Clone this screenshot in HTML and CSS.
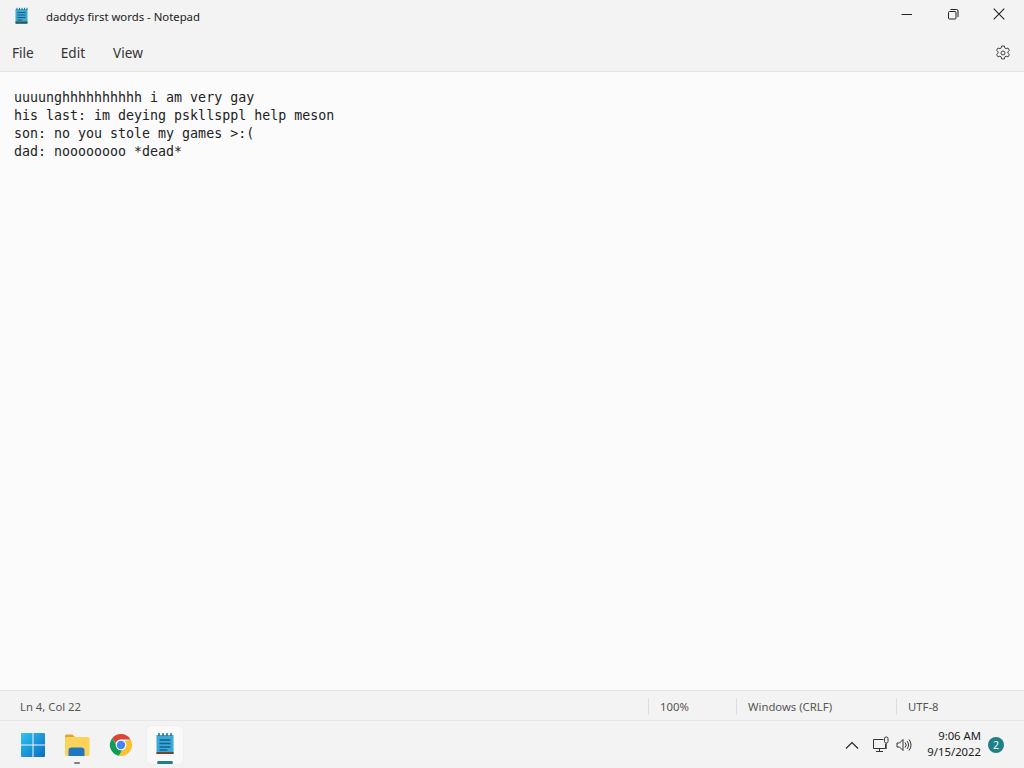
FILE: index.html
```html
<!DOCTYPE html>
<html lang="en">
<head>
<meta charset="utf-8">
<title>daddys first words - Notepad</title>
<link rel="stylesheet" href="styles.css">
</head>
<body>
<div class="window">
  <header class="titlebar">
    <svg class="app-icon" width="16" height="18" viewBox="0 0 16 18">
      <rect x="1.5" y="2" width="12" height="14" fill="#3fa9d6"/>
      <rect x="1.5" y="14.5" width="12" height="1.5" fill="#5b4a32"/>
      <rect x="1.5" y="16" width="12" height="1" fill="#1e8a8f"/>
      <path d="M3.5 5.5h8M3.5 8h8M3.5 10.5h8M3.5 13h5" stroke="#16607f" stroke-width="1"/>
      <path d="M3 .8v2M5.5 .8v2M8 .8v2M10.5 .8v2M13 .8v2" stroke="#1f6e8c" stroke-width="1"/>
    </svg>
    <span class="title">daddys first words - Notepad</span>
    <div class="winctl">
      <svg width="12" height="12" viewBox="0 0 12 12"><path d="M.5 6.5h10.5" stroke="#222" stroke-width="1"/></svg>
      <svg width="12" height="12" viewBox="0 0 12 12" fill="none" stroke="#222"><rect x="1.5" y="3.5" width="7.5" height="7.5" rx="1"/><path d="M3.5 1.5h6a1.5 1.5 0 0 1 1.5 1.5v6"/></svg>
      <svg width="12" height="12" viewBox="0 0 12 12"><path d="M.7 .7l10.6 10.6M11.3 .7L.7 11.3" stroke="#222" stroke-width="1.1"/></svg>
    </div>
  </header>
  <nav class="menubar">
    <span class="menu-item">File</span>
    <span class="menu-item">Edit</span>
    <span class="menu-item">View</span>
    <svg class="gear" width="16" height="16" viewBox="0 0 16 16" fill="none" stroke="#444" stroke-width="1">
      <circle cx="8" cy="8" r="2"/>
      <path d="M6.6 1h2.8l.4 2 1.3.7 1.9-.7 1.4 2.4-1.5 1.3v1.5l1.5 1.3-1.4 2.4-1.9-.7-1.3.7-.4 2H6.6l-.4-2-1.3-.7-1.9.7L1.6 9.5l1.5-1.3V6.7L1.6 5.4 3 3l1.9.7 1.3-.7z"/>
    </svg>
  </nav>
  <main class="editor">
    <div class="line">uuuunghhhhhhhhhh i am very gay</div>
    <div class="line">his last: im deying pskllsppl help meson</div>
    <div class="line">son: no you stole my games &gt;:(</div>
    <div class="line">dad: noooooooo *dead*</div>
  </main>
  <footer class="statusbar">
    <span class="st-pos">Ln 4, Col 22</span>
    <span class="st-cell st-zoom">100%</span>
    <span class="st-cell st-eol">Windows (CRLF)</span>
    <span class="st-cell st-enc">UTF-8</span>
  </footer>
</div>
<div class="taskbar">
  <div class="tb-apps">
    <div class="tb-app">
      <svg width="24" height="24" viewBox="0 0 24 24">
        <defs><linearGradient id="w" x1="0" y1="0" x2="1" y2="1"><stop offset="0" stop-color="#2fc4f2"/><stop offset="1" stop-color="#0a6cc0"/></linearGradient></defs>
        <path fill="url(#w)" d="M0 1a1 1 0 0 1 1-1h10.500v11.500H0zM12.500 0H23a1 1 0 0 1 1 1v10.500H12.500zM0 12.500h11.500V24H1a1 1 0 0 1-1-1zM12.500 12.500H24V23a1 1 0 0 1-1 1H12.500z"/>
      </svg>
    </div>
    <div class="tb-app tb-running">
      <svg width="26" height="24" viewBox="0 0 26 24">
        <path fill="#d9a72e" d="M1 3a1.500 1.500 0 0 1 1.500-1.500h6L11 4v3H1z"/>
        <rect x="1" y="4" width="24.500" height="19" rx="1.500" fill="#fbd25a"/>
        <path fill="#1f77bf" d="M4.500 23v-5.500a3 3 0 0 1 3-3h10a3 3 0 0 1 3 3V23z"/>
      </svg>
    </div>
    <div class="tb-app">
      <svg width="24" height="24" viewBox="0 0 24 24">
        <path fill="#db4437" d="M12 1a11 11 0 0 1 9.530 5.500H12a5.500 5.500 0 0 0-5.200 3.700L3.300 5A11 11 0 0 1 12 1z"/>
        <path fill="#0f9d58" d="M3.300 5l4.500 7.800A5.500 5.500 0 0 0 13.200 17.400L10 22.800A11 11 0 0 1 3.300 5z"/>
        <path fill="#fbc02d" d="M21.530 6.500A11 11 0 0 1 10 22.800l4.750-8.200A5.500 5.500 0 0 0 15 8.500z"/>
        <circle cx="12" cy="12" r="5.300" fill="#fff"/>
        <circle cx="12" cy="12" r="4.200" fill="#4285f4"/>
      </svg>
    </div>
    <div class="tb-app tb-active">
      <svg width="20" height="26" viewBox="0 0 20 26">
        <rect x="1.500" y="3" width="17" height="19" fill="#3aa8d8"/>
        <rect x="1.500" y="20" width="17" height="2" fill="#6b4a2c"/>
        <rect x="1.500" y="22" width="17" height="2" fill="#f3f3f3"/>
        <path d="M4.500 8h11M4.500 11.500h11M4.500 15h11M4.500 18h8" stroke="#14618a" stroke-width="1.300"/>
        <path d="M4 1v3M8 1v3M12 1v3M16 1v3" stroke="#1f6e8c" stroke-width="1.500"/>
      </svg>
    </div>
  </div>
  <div class="tray">
    <svg width="14" height="14" viewBox="0 0 14 14" fill="none" stroke="#222" stroke-width="1.100"><path d="M1 10.500l6-6 6 6"/></svg>
    <svg class="tray-net" width="18" height="17" viewBox="0 0 18 17" fill="none" stroke="#333"><path d="M11.500 3.500H1.500v9h12V8"/><path d="M7.500 12.500v3M4 15.500h7"/><rect x="12.500" y="1" width="3.500" height="6" rx="1.500"/><path d="M14.200 7v6"/></svg>
    <svg class="tray-vol" width="17" height="14" viewBox="0 0 17 14" fill="none" stroke="#333"><path d="M1 5h2.500L7 1.500v11L3.500 9H1z"/><path d="M9 4.500a3.500 3.500 0 0 1 0 5M11 3a6 6 0 0 1 0 8M13 1.500a8.500 8.500 0 0 1 0 11"/></svg>
    <div class="clock"><span>9:06 AM</span><span>9/15/2022</span></div>
    <span class="badge">2</span>
  </div>
</div>
</body>
</html>
```
FILE: styles.css
```css
* { box-sizing: border-box; }
html, body { margin: 0; height: 100%; }
body {
  width: 1024px; height: 768px; overflow: hidden;
  display: flex; flex-direction: column;
  background: #f3f3f3;
  font-family: "Noto Sans", "Open Sans", sans-serif;
  color: #1a1a1a;
}
.window { flex: 1; display: flex; flex-direction: column; min-height: 0; }
.titlebar { height: 32px; display: flex; align-items: center; padding-left: 14px; flex: none; }
.app-icon { flex: none; }
.title { margin-left: 16px; font-size: 11.35px; color: #222; }
.winctl { margin-left: auto; display: flex; align-items: center; gap: 34px; padding: 0 19px 4px 0; }
.menubar { height: 40px; flex: none; display: flex; align-items: center; padding: 2px 13px 0 12px; gap: 28px; border-bottom: 1px solid #e3e3e3; font-size: 13.6px; color: #333; }
.menu-item:first-child { margin-right: -1px; }
.gear { margin-left: auto; }
.editor {
  flex: 1; background: #fbfbfb; padding: 17px 14px 0;
  font-family: "DejaVu Sans Mono", "Liberation Mono", monospace;
  font-size: 13.3px; line-height: 18px; color: #222;
}
.line { white-space: pre; }
.statusbar { height: 31px; flex: none; display: flex; align-items: center; padding-top: 2px; border-top: 1px solid #e3e3e3; border-bottom: 1px solid #e6e6e6; font-size: 11.3px; color: #555; }
.st-pos { width: 648px; padding-left: 20px; }
.st-cell { border-left: 1px solid #dedede; height: 17px; line-height: 17px; padding-left: 11px; }
.st-zoom { width: 88px; }
.st-eol { width: 160px; }
.taskbar { height: 47px; flex: none; display: flex; align-items: center; justify-content: space-between; background: #f3f3f3; }
.tb-apps { display: flex; align-items: center; padding-left: 11px; height: 100%; }
.tb-app { width: 44px; height: 38px; display: flex; align-items: center; justify-content: center; position: relative; }
.tb-running::after { content: ""; position: absolute; bottom: 0; left: 19px; width: 6px; height: 2px; border-radius: 1px; background: #808080; }
.tb-active { width: 36px; margin-left: 4px; background: #f9f9f9; border-radius: 4px; box-shadow: 0 0 1px #d8d8d8; }
.tb-active::after { content: ""; position: absolute; bottom: 0; left: 10px; width: 16px; height: 3px; border-radius: 2px; background: #1f7f83; }
.tray { display: flex; align-items: center; padding-right: 20px; }
.tray-net { margin-left: 13px; }
.tray-vol { margin-left: 6px; }
.clock { margin: -2px 0 0 14px; display: flex; flex-direction: column; align-items: flex-end; font-size: 11.3px; line-height: 16px; color: #222; }
.badge { margin-left: 7px; width: 16px; height: 16px; border-radius: 50%; background: #20808a; color: #fff; font-size: 10.5px; line-height: 16px; text-align: center; }
```
